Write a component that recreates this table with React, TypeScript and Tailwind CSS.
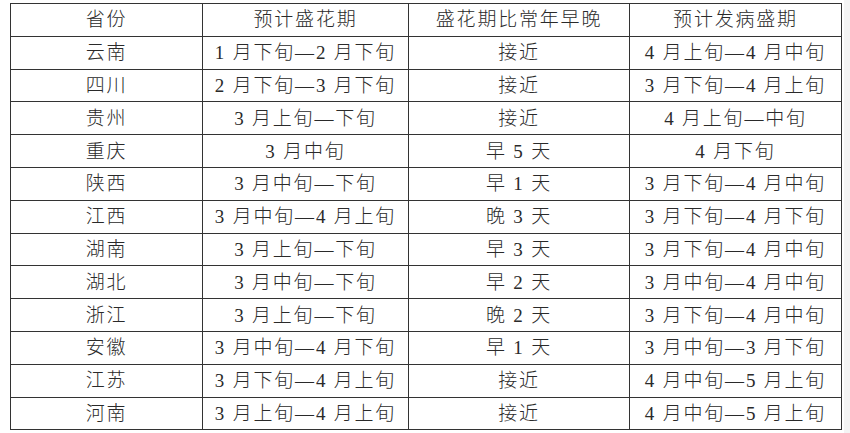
import React from 'react';

const rows: [string, string, string, string][] = [
  ['云南', '1 月下旬—2 月下旬', '接近', '4 月上旬—4 月中旬'],
  ['四川', '2 月下旬—3 月下旬', '接近', '3 月下旬—4 月上旬'],
  ['贵州', '3 月上旬—下旬', '接近', '4 月上旬—中旬'],
  ['重庆', '3 月中旬', '早 5 天', '4 月下旬'],
  ['陕西', '3 月中旬—下旬', '早 1 天', '3 月下旬—4 月中旬'],
  ['江西', '3 月中旬—4 月上旬', '晚 3 天', '3 月下旬—4 月下旬'],
  ['湖南', '3 月上旬—下旬', '早 3 天', '3 月下旬—4 月中旬'],
  ['湖北', '3 月中旬—下旬', '早 2 天', '3 月中旬—4 月中旬'],
  ['浙江', '3 月上旬—下旬', '晚 2 天', '3 月下旬—4 月中旬'],
  ['安徽', '3 月中旬—4 月下旬', '早 1 天', '3 月中旬—3 月下旬'],
  ['江苏', '3 月下旬—4 月上旬', '接近', '4 月中旬—5 月上旬'],
  ['河南', '3 月上旬—4 月上旬', '接近', '4 月中旬—5 月上旬'],
];

const headers = ['省份', '预计盛花期', '盛花期比常年早晚', '预计发病盛期'];

const cell = 'border border-[#333] text-center align-middle p-0 leading-none font-light';

export default function App() {
  return (
    <div className="flex w-[850px] h-[433px] bg-white">
      <div className="pl-[10px] pt-[3px]">
        <table
          className="border-collapse table-fixed w-[831px] text-[19px] tracking-[1.8px] text-[#2a2a2a]"
          style={{ fontFamily: '"Liberation Serif", "Noto Sans CJK SC", serif' }}
        >
          <colgroup>
            <col className="w-[192px]" />
            <col className="w-[206px]" />
            <col className="w-[221px]" />
            <col className="w-[212px]" />
          </colgroup>
          <thead>
            <tr className="h-[32.8px]">
              {headers.map((h) => (
                <th key={h} className={cell}>
                  {h}
                </th>
              ))}
            </tr>
          </thead>
          <tbody>
            {rows.map((r) => (
              <tr key={r[0]} className="h-[32.8px]">
                {r.map((c, i) => (
                  <td key={i} className={cell}>
                    {c}
                  </td>
                ))}
              </tr>
            ))}
          </tbody>
        </table>
      </div>
      <div className="flex-1 bg-[#f4f4f4] ml-[2px]" />
    </div>
  );
}
